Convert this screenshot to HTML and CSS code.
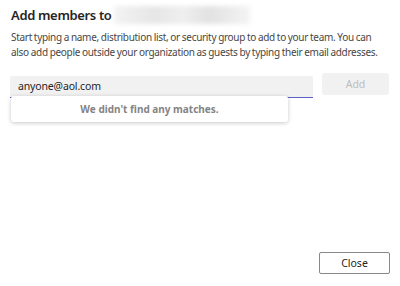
FILE: index.html
```html
<!DOCTYPE html>
<html lang="en">
<head>
    <meta charset="UTF-8">
    <title>Add members</title>
    <link rel="stylesheet" href="styles.css">
</head>
<body>
    <div class="dialog">
        <h1 class="title">Add members to <span class="team-name"></span></h1>
        <p class="hint">Start typing a name, distribution list, or security group to add to your team. You can also add people outside your organization as guests by typing their email addresses.</p>
        <div class="picker-row">
            <div class="picker">
                <input type="text" class="picker-input" value="anyone@aol.com">
                <div class="no-match">We didn't find any matches.</div>
            </div>
            <button type="button" class="add-btn" disabled>Add</button>
        </div>
        <div class="footer">
            <button type="button" class="close-btn">Close</button>
        </div>
    </div>
</body>
</html>
```

FILE: styles.css
```css
body {
    margin: 0;
    font-family: "Noto Sans", "Open Sans", sans-serif;
    background-color: #ffffff;
    color: #242424;
}
.dialog {
    width: 400px;
    height: 286px;
    box-sizing: border-box;
    padding: 5px 11px 12px 11px;
    display: flex;
    flex-direction: column;
}
.title {
    margin: 0;
    font-size: 13px;
    font-weight: 600;
    line-height: 20px;
    letter-spacing: -0.35px;
    display: flex;
    align-items: center;
    color: #252423;
}
.team-name {
    display: inline-block;
    width: 136px;
    height: 18px;
    margin-left: 2px;
    background: linear-gradient(90deg, #f3f3f3, #e6e6e6 30%, #efefef 50%, #e2e2e2 70%, #f4f4f4);
    filter: blur(2px);
}
.hint {
    margin: 5px 0 0 0;
    font-size: 10px;
    line-height: 15px;
    color: #484644;
    letter-spacing: -0.3px;
    word-spacing: -0.4px;
}
.picker-row {
    display: flex;
    margin-top: 13px;
    margin-left: -1px;
}
.picker {
    position: relative;
    width: 303px;
}
.picker-input {
    width: 100%;
    height: 22px;
    box-sizing: border-box;
    border: none;
    border-bottom: 1.5px solid #5b5fc7;
    border-radius: 2px 2px 0 0;
    background-color: #f1f1f2;
    padding: 0 8px;
    font-family: inherit;
    font-size: 10.5px;
    letter-spacing: -0.15px;
    color: #252423;
    outline: none;
}
.no-match {
    position: absolute;
    top: 23px;
    left: 1px;
    width: 277px;
    height: 26px;
    background: #ffffff;
    border-radius: 3px;
    box-shadow: 0 1px 4px rgba(0, 0, 0, 0.22);
    font-size: 10px;
    font-weight: 700;
    color: #848484;
    display: flex;
    align-items: center;
    justify-content: center;
}
.add-btn {
    margin-left: 9px;
    width: 67px;
    height: 22px;
    border: none;
    border-radius: 3px;
    background-color: #f1f1f2;
    color: #bdbdbd;
    font-family: inherit;
    font-size: 10.5px;
}
.footer {
    margin-top: auto;
    display: flex;
    justify-content: flex-end;
}
.close-btn {
    width: 71px;
    height: 22px;
    background: #ffffff;
    border: 1px solid #8a8886;
    border-radius: 2px;
    font-family: inherit;
    font-size: 10.5px;
    color: #252423;
    margin-right: -1px;
}
```
